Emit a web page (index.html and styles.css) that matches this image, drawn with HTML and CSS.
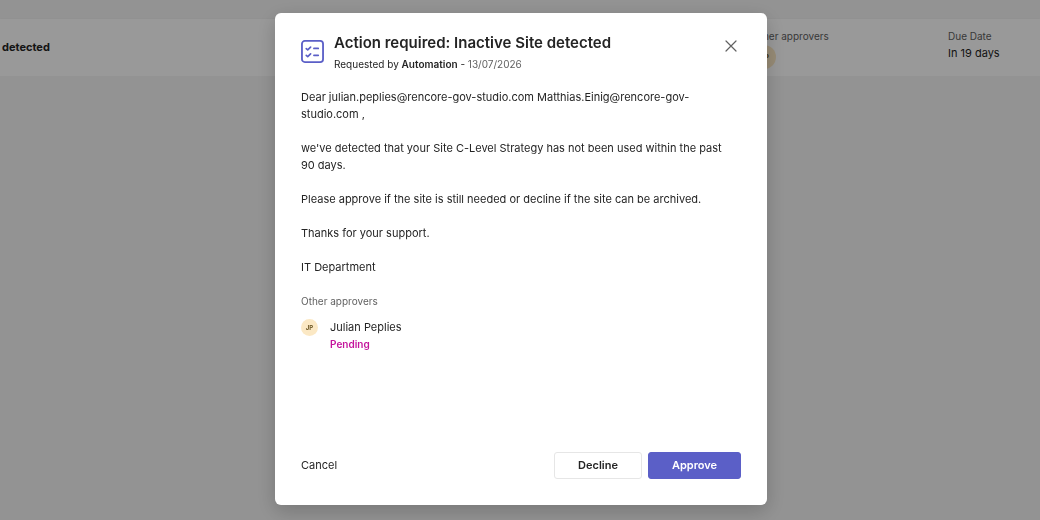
FILE: index.html
```
<!DOCTYPE html>
<html lang="en">
<head>
  <meta charset="utf-8">
  <title>Approvals</title>
  <link rel="stylesheet" href="styles.css">
</head>
<body>
  <main class="page">
    <div class="request">
      <div class="request-title">detected</div>
      <div class="request-field approvers">
        <span class="label">Other approvers</span>
        <span class="avatar avatar-large">JP</span>
      </div>
      <div class="request-field due">
        <span class="label">Due Date</span>
        <span class="value">In 19 days</span>
      </div>
    </div>
  </main>

  <div class="overlay">
    <div class="dialog" role="dialog" aria-modal="true" aria-labelledby="dialog-title">
      <div class="dialog-header">
        <svg class="dialog-icon" width="23" height="23" viewBox="0 0 24 24" fill="none" stroke="#5b5fc7" stroke-linecap="round" stroke-linejoin="round" aria-hidden="true">
          <rect x="1" y="1" width="22" height="22" rx="3" stroke-width="1.9"/>
          <path d="M5.5 9l1.5 1.3L10 7.5M5.5 16L7 17.3l3-2.8M13.5 8.8H18M13.5 16H18" stroke-width="1.8"/>
        </svg>
        <div class="dialog-heading">
          <h1 id="dialog-title">Action required: Inactive Site detected</h1>
          <p>Requested by <strong>Automation</strong> - <span class="date">13/07/2026</span></p>
        </div>
        <button class="close" type="button" aria-label="Close">
          <svg width="12" height="12" viewBox="0 0 12 12" fill="none" stroke="#616161" stroke-width="1.2" stroke-linecap="round">
            <path d="M1 1l10 10M11 1L1 11"/>
          </svg>
        </button>
      </div>

      <div class="message">
        <p>Dear julian.peplies@rencore-gov-studio.com Matthias.Einig@rencore-gov-studio.com ,</p>
        <p>we've detected that your Site C-Level Strategy has not been used within the past 90 days.</p>
        <p>Please approve if the site is still needed or decline if the site can be archived.</p>
        <p>Thanks for your support.</p>
        <p>IT Department</p>
      </div>

      <h2>Other approvers</h2>
      <div class="approver">
        <span class="avatar">JP</span>
        <div>
          <div class="approver-name">Julian Peplies</div>
          <div class="approver-status">Pending</div>
        </div>
      </div>

      <div class="dialog-footer">
        <button class="cancel" type="button">Cancel</button>
        <button class="button" type="button">Decline</button>
        <button class="button primary" type="button">Approve</button>
      </div>
    </div>
  </div>
</body>
</html>
```
FILE: styles.css
```
* {
  box-sizing: border-box;
}

body {
  margin: 0;
  background-color: #f5f5f5;
  color: #242424;
  font-family: Inter, "Liberation Sans", sans-serif;
  font-size: 11px;
  line-height: 17px;
}

h1,
h2,
p {
  margin: 0;
}

strong {
  font-weight: 600;
}

button {
  font: inherit;
  color: inherit;
  cursor: pointer;
}

/* Request list behind the dialog */
.page {
  padding-top: 19px;
}

.request {
  display: flex;
  height: 57px;
  background-color: #fff;
  box-shadow: 0 1px 2px rgba(0, 0, 0, 0.2);
}

.request-title {
  flex: 1;
  padding: 20px 2px;
  font-weight: 700;
}

.request-field {
  display: flex;
  flex-direction: column;
  padding-top: 9px;
}

.approvers {
  width: 196px;
}

.due {
  width: 92px;
}

.label {
  color: #616161;
  font-size: 10px;
}

/* Avatars */
.avatar {
  display: flex;
  flex-shrink: 0;
  align-items: center;
  justify-content: center;
  width: 17px;
  height: 17px;
  border-radius: 50%;
  background-color: #fbe8c4;
  color: #6d5724;
  font-size: 6px;
  font-weight: 700;
}

.avatar-large {
  width: 24px;
  height: 24px;
  font-size: 8px;
}

/* Dialog */
.overlay {
  position: fixed;
  inset: 0;
  display: flex;
  align-items: center;
  justify-content: center;
  padding: 0 0 2px 2px;
  background-color: rgba(0, 0, 0, 0.4);
}

.dialog {
  display: flex;
  flex-direction: column;
  width: 492px;
  max-width: 100%;
  min-height: 492px;
  padding: 20px 26px 26px;
  border-radius: 6px;
  background-color: #fff;
  box-shadow: 0 6px 20px rgba(0, 0, 0, 0.2);
}

.dialog-header {
  display: flex;
  align-items: flex-start;
  margin-bottom: 16px;
}

.dialog-icon {
  margin: 7px 10px 0 0;
}

.dialog-heading {
  flex: 1;
  font-size: 10px;
}

.dialog-heading h1 {
  margin-bottom: 3px;
  font-size: 15px;
  font-weight: 600;
  line-height: 20px;
}

.date {
  color: #616161;
}

.close {
  display: flex;
  margin-top: 3px;
  padding: 4px;
  border: none;
  background: none;
}

.message {
  padding-right: 6px;
}

.message p {
  margin-bottom: 17px;
}

.dialog h2 {
  color: #616161;
  font-size: 10px;
  font-weight: 400;
}

.approver {
  display: flex;
  gap: 12px;
  margin-top: 9px;
}

.approver-status {
  color: #c4149c;
  font-size: 10px;
  font-weight: 600;
}

.dialog-footer {
  display: flex;
  align-items: center;
  gap: 6px;
  margin-top: auto;
}

.cancel {
  margin-right: auto;
  padding: 0;
  border: none;
  background: none;
}

.button {
  width: 88px;
  height: 27px;
  padding: 0;
  border: 1px solid #e6e6e6;
  border-radius: 3px;
  background-color: #fff;
  font-weight: 600;
}

.primary {
  width: 93px;
  border-color: #5b5fc7;
  background-color: #5b5fc7;
  color: #fff;
}
```
